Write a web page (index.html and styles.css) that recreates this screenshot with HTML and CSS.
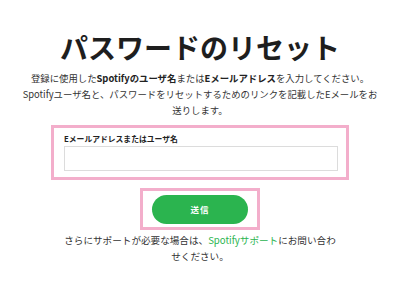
FILE: index.html
```html
<!DOCTYPE html>
<html lang="ja">
<head>
<meta charset="utf-8">
<link rel="stylesheet" href="styles.css">
</head>
<body>
<main class="page">
  <h1 class="title">パスワードのリセット</h1>
  <p class="lead">登録に使用した<b>Spotifyのユーザ名</b>または<b>Eメールアドレス</b>を入力してください。Spotifyユーザ名と、パスワードをリセットするためのリンクを記載したEメールをお送りします。</p>
  <form class="form">
    <div class="field-box">
      <label class="label" for="user">Eメールアドレスまたはユーザ名</label>
      <input class="input" id="user" type="text">
    </div>
    <div class="btn-box">
      <button class="btn" type="button">送信</button>
    </div>
  </form>
  <p class="help">さらにサポートが必要な場合は、<a class="link" href="#">Spotifyサポート</a>にお問い合わせください。</p>
</main>
</body>
</html>
```

FILE: styles.css
```css
* { box-sizing: border-box; }
html, body { margin: 0; padding: 0; background: #ffffff; }
body {
  width: 400px;
  height: 298px;
  overflow: hidden;
  font-family: "Noto Sans CJK JP", "Noto Sans", sans-serif;
  color: #222222;
}
.page {
  display: flex;
  flex-direction: column;
  align-items: center;
  padding-top: 28px;
}
.title {
  margin: 0;
  font-size: 28px;
  line-height: 38px;
  font-weight: 700;
  color: #1e1e1e;
  letter-spacing: 0;
}
.lead {
  margin: 4px 0 0;
  width: 362px;
  font-size: 9.4px;
  line-height: 16px;
  text-align: center;
  color: #333333;
}
.lead b { font-weight: 700; color: #222222; }
.form {
  display: flex;
  flex-direction: column;
  align-items: center;
  margin-top: 7px;
}
.field-box {
  width: 298px;
  border: 3px solid #f3aecb;
  padding: 5px 8px 6px 10px;
  display: flex;
  flex-direction: column;
}
.label {
  font-size: 7.8px;
  line-height: 12px;
  font-weight: 700;
  color: #222222;
  margin-bottom: 1px;
}
.input {
  width: 274px;
  height: 25px;
  border: 1px solid #dcdcdc;
  background: #ffffff;
  margin: 0;
  padding: 0 6px;
  outline: none;
}
.btn-box {
  margin-top: 8px;
  width: 120px;
  height: 42px;
  border: 3px solid #f3aecb;
  display: flex;
  align-items: center;
  justify-content: center;
}
.btn {
  width: 96px;
  height: 29px;
  border: none;
  border-radius: 15px;
  background: #2bb44f;
  color: #ffffff;
  font-family: "Noto Sans CJK JP", sans-serif;
  font-size: 8.5px;
  font-weight: 700;
  letter-spacing: 1px;
  padding: 0;
}
.help {
  margin: 2px 0 0;
  width: 278px;
  font-size: 9.6px;
  line-height: 16px;
  text-align: center;
  color: #333333;
}
.link { color: #2bb44f; text-decoration: none; }
```
